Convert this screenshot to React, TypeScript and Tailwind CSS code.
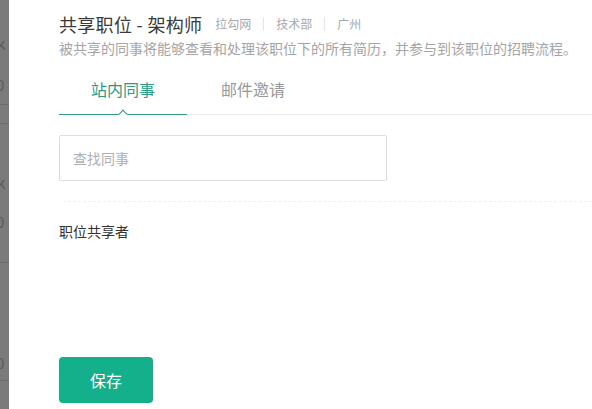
import { useState } from 'react'

const font = { fontFamily: '"Noto Sans CJK SC", "Noto Sans", sans-serif' }

const tags = ['拉勾网', '技术部', '广州']

function BackdropStrip() {
  // 遮罩下露出的页面一角
  return (
    <div className="relative w-[9px] shrink-0 overflow-hidden bg-[#7b7b7b] text-[15px] leading-none text-[#5a5a5a]">
      <div className="absolute left-0 top-[104px] h-px w-full bg-[#6c6c6c]" />
      <div className="absolute left-0 top-[123px] h-px w-full bg-[#6c6c6c]" />
      <div className="absolute left-0 top-[262px] h-px w-full bg-[#6c6c6c]" />
      <div className="absolute left-0 top-[380px] h-px w-full bg-[#6c6c6c]" />
      <span className="absolute -left-[3px] top-[36px]">k</span>
      <span className="absolute -left-[4px] top-[77px]">0</span>
      <span className="absolute -left-[3px] top-[175px]">k</span>
      <span className="absolute -left-[4px] top-[214px]">0</span>
      <span className="absolute -left-[4px] top-[355px]">0</span>
    </div>
  )
}

export default function App() {
  const [tab, setTab] = useState<'inner' | 'mail'>('inner')

  return (
    <div className="flex h-[409px] w-[592px] overflow-hidden bg-white" style={font}>
      <BackdropStrip />
      <div className="flex flex-1 flex-col bg-white pt-[12px] shadow-[-2px_0_4px_rgba(0,0,0,0.08)]">
        <div className="pl-[50px]">
          <div className="flex items-center">
            <h2 className="text-[18px] leading-[24px] tracking-[0.3px] text-[#3a3a3a]">共享职位 - 架构师</h2>
            <div className="ml-[13px] flex items-center text-[12px] text-[#a8a8a8]">
              {tags.map((t, i) => (
                <span key={t} className="flex items-center">
                  {i > 0 && <span className="mx-[12px] h-[14px] w-px bg-[#e6e6e6]" />}
                  {t}
                </span>
              ))}
            </div>
          </div>
          <p className="mt-[2px] text-[14px] leading-[20px] text-[#a5a5a5]">
            被共享的同事将能够查看和处理该职位下的所有简历，并参与到该职位的招聘流程。
          </p>
        </div>

        <div className="ml-[50px] mt-[15px] flex border-b border-[#ececec]">
          <button
            type="button"
            onClick={() => setTab('inner')}
            className={`relative -mb-px h-[42px] w-[128px] border-b pb-[9px] text-[16px] ${
              tab === 'inner' ? 'border-[#2d9a7e] text-[#2d9a7e]' : 'border-transparent text-[#999]'
            }`}
          >
            站内同事
            {tab === 'inner' && (
              <span className="absolute bottom-[-4px] left-1/2 h-[7px] w-[7px] -translate-x-1/2 rotate-45 border-l border-t border-[#2d9a7e] bg-white" />
            )}
          </button>
          <button
            type="button"
            onClick={() => setTab('mail')}
            className={`relative -mb-px h-[42px] w-[132px] border-b pb-[9px] text-[16px] ${
              tab === 'mail' ? 'border-[#2d9a7e] text-[#2d9a7e]' : 'border-transparent text-[#999]'
            }`}
          >
            邮件邀请
          </button>
        </div>

        <div className="pl-[50px] pt-[20px]">
          <input
            placeholder="查找同事"
            className="h-[46px] w-[328px] rounded-[2px] border border-[#dcdcdc] px-[13px] text-[14px] text-[#333] outline-none placeholder:text-[#b0b0b0]"
          />
        </div>

        <div className="ml-[54px] mt-[20px] border-t border-dashed border-[#f0f0f0]" />

        <div className="pl-[50px] pt-[19px] text-[14px] leading-[20px] text-[#333]">职位共享者</div>

        <div className="mt-auto pb-[6px] pl-[50px]">
          <button
            type="button"
            className="h-[46px] w-[94px] rounded-[4px] bg-[#14b08b] text-[16px] text-white"
          >
            保存
          </button>
        </div>
      </div>
    </div>
  )
}
